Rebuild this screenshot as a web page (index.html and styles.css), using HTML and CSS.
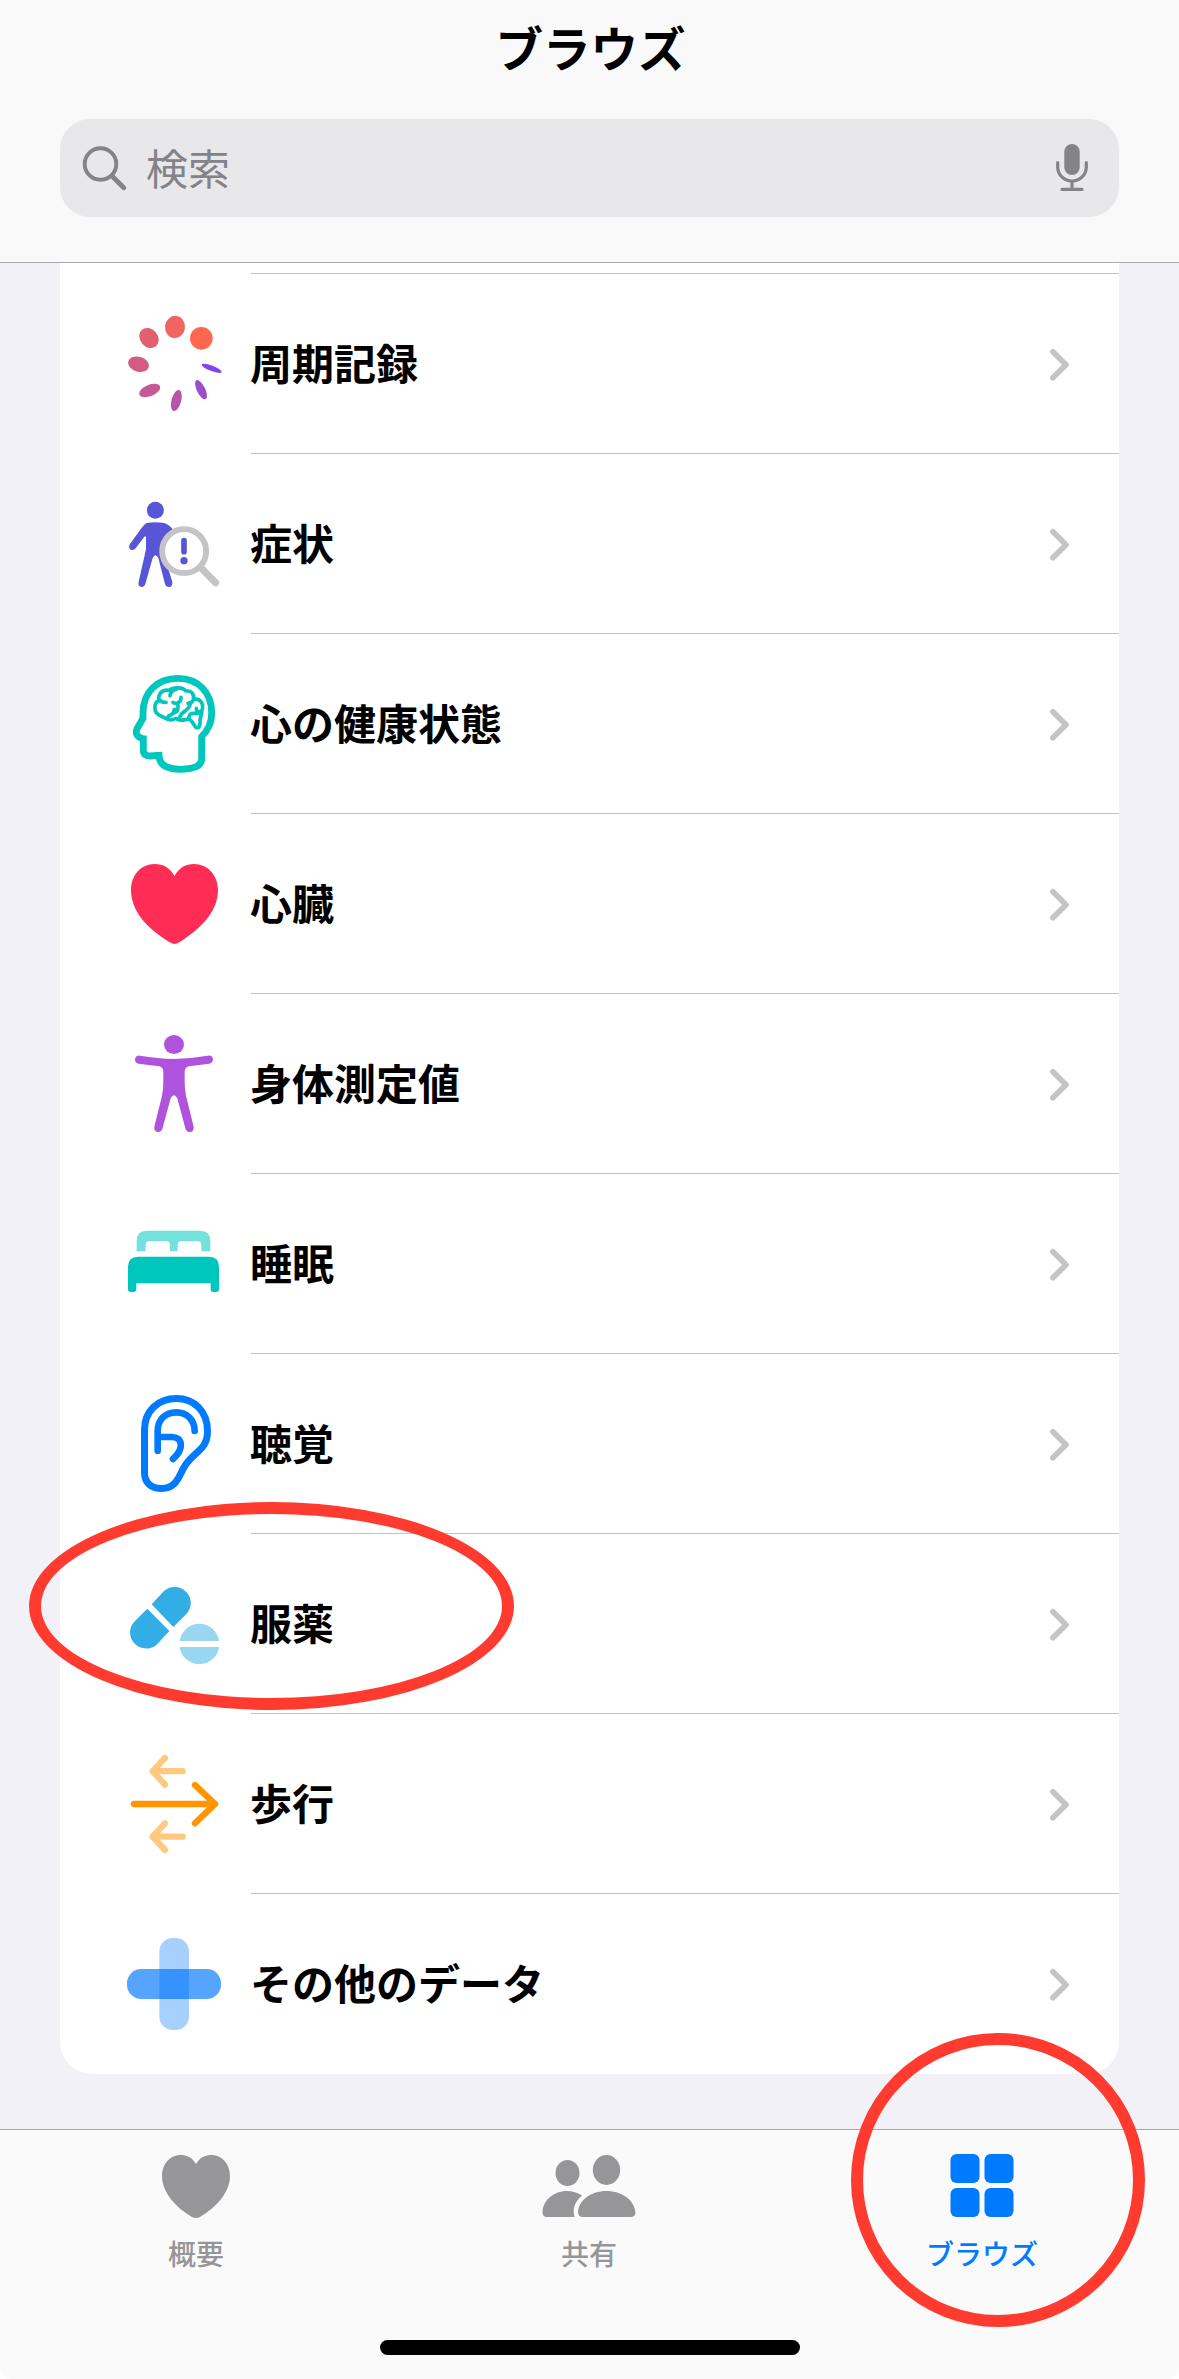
FILE: index.html
```html
<!DOCTYPE html>
<html lang="ja">
<head>
<meta charset="utf-8">
<title>ブラウズ</title>
<link rel="stylesheet" href="styles.css">
</head>
<body>
<svg class="defs" width="0" height="0">
  <symbol id="chevron" viewBox="0 0 24 36"><path d="M5.900 5.800 19 18.800 5.900 31.800" fill="none" stroke="#c4c4c7" stroke-width="5.600" stroke-linecap="round" stroke-linejoin="round"/></symbol>
</svg>
<div class="screen">
  <header class="header">
    <h1 class="title">ブラウズ</h1>
    <div class="search">
      <svg class="search-icon" viewBox="0 0 48 48"><circle cx="20.500" cy="20" r="15.800" fill="none" stroke="currentColor" stroke-width="3.900"/><path d="M32 32 43.800 43.800" stroke="currentColor" stroke-width="4.800" stroke-linecap="round"/></svg>
      <span class="placeholder">検索</span>
      <svg class="mic-icon" viewBox="0 0 34 48"><rect x="9.300" y="0" width="15.400" height="31" rx="7.700" fill="currentColor"/><path d="M2.700 18.500V23a14.300 14 0 0 0 28.600 0V18.500M17 37v8M7 45.400h20" fill="none" stroke="currentColor" stroke-width="3.200" stroke-linecap="round"/></svg>
    </div>
  </header>

  <main class="content">
    <ul class="card">
      <li class="row">
        <svg class="icon" viewBox="30 27 330 330">
          <circle cx="274" cy="115" r="34" fill="#ff684f"/>
          <ellipse cx="195" cy="81" rx="30" ry="33.500" fill="#f16462" transform="rotate(8 195 81)"/>
          <ellipse cx="117" cy="114" rx="26.500" ry="32.500" fill="#e16070" transform="rotate(-40 117 114)"/>
          <ellipse cx="85.500" cy="192.500" rx="32" ry="22.500" fill="#d35c83" transform="rotate(15 85.500 192.500)"/>
          <ellipse cx="119" cy="271.500" rx="33.500" ry="17" fill="#c65894" transform="rotate(-22 119 271.500)"/>
          <ellipse cx="199" cy="301.500" rx="14.500" ry="32.500" fill="#b654a8" transform="rotate(15 199 301.500)"/>
          <ellipse cx="273" cy="269" rx="12.500" ry="31.500" fill="#9b4dcb" transform="rotate(-26 273 269)"/>
          <ellipse cx="305" cy="205" rx="32" ry="8" fill="#7f45f0" transform="rotate(21 305 205)"/>
        </svg>
        <span class="label">周期記録</span><svg class="chevron"><use href="#chevron"/></svg>
      </li>
      <li class="row">
        <svg class="icon" viewBox="30 567 330 330">
          <g fill="#5856d6"><circle cx="136" cy="631" r="25.500"/>
          <path d="M110 669Q136 664 162 669Q178 674 192 692L160 735L165 775L187 846Q188 861 177 861Q168 861 165 852L145 774Q136 758 128 774L106 852Q103 861 95 861Q83 859 86 845L108 748V711Q106 706 102 712L78 743Q71 753 62 749Q54 742 60 732L92 688Q100 674 110 669Z"/></g>
          <circle cx="222.500" cy="753.500" r="66" fill="#fff" stroke="#c4c4c6" stroke-width="17.500"/>
          <path d="M271 802 317 848" stroke="#c4c4c6" stroke-width="21" stroke-linecap="round"/>
          <path d="M222 722V755" stroke="#5856d6" stroke-width="17" stroke-linecap="round"/><circle cx="222" cy="782" r="11" fill="#5856d6"/>
        </svg>
        <span class="label">症状</span><svg class="chevron"><use href="#chevron"/></svg>
      </li>
      <li class="row">
        <svg class="icon" viewBox="30 57 330 330" fill="none" stroke="#00c7be" stroke-linecap="round" stroke-linejoin="round">
          <path stroke-width="20.500" stroke-linecap="butt" stroke-linejoin="miter" d="M110 267H100Q72 259 81 236L99 205V188C100 125 142 85 204 85C265 85 305 128 305 188Q306 229 275 260V328Q273 357 211 358Q148 357 147 316L120 318Q100 317 100 302V258"/>
          <path stroke-width="11" d="M147 152C143 133 156 117 178 121C190 111 219 111 227 123C244 121 254 132 250 148C273 144 283 163 275 184C277 196 270 200 270 210C271 222 270 235 259 233C250 228 250 211 235 207C220 210 209 214 198 205C181 216 167 204 153 198C129 190 130 158 147 152ZM147 148Q154 158 168 157M180 138Q180 122 202 116M189 157Q193 161 203 159Q214 153 213 142M203 159Q208 185 193 189M193 178Q191 195 175 198M250 148Q250 158 234 160M241 158C242 185 210 181 208 207M237 207Q235 189 251 190H268M259 175Q258 188 275 184"/>
        </svg>
        <span class="label">心の健康状態</span><svg class="chevron"><use href="#chevron"/></svg>
      </li>
      <li class="row">
        <svg class="icon" viewBox="30 597 330 330"><path fill="#ff2d55" d="M193.500 678C179 652 160 642 134 642C93 642 63 676 63 720C63 784 112 836 178 876Q188 882 193.500 882Q199 882 209 876C273 836 324 784 324 720C324 676 293 642 252 642C227 642 208 652 193.500 678Z"/></svg>
        <span class="label">心臓</span><svg class="chevron"><use href="#chevron"/></svg>
      </li>
      <li class="row">
        <svg class="icon" viewBox="30 57 330 330" fill="#af52de"><ellipse cx="192" cy="103.500" rx="30" ry="28.500"/><path d="M90 137Q145 146 192 147Q240 146 293 137Q307 135 309 148Q309 158 298 161L236 169Q225 172 224 184V215Q224 237 228 257L251 350Q252 365 240 366Q229 367 226 355L202 265Q192 246 182 265L158 353Q154 367 143 366Q131 363 133 350L156 257Q160 237 160 215V184Q159 172 148 169L85 161Q74 158 75 147Q79 135 90 137Z"/></svg>
        <span class="label">身体測定値</span><svg class="chevron"><use href="#chevron"/></svg>
      </li>
      <li class="row">
        <svg class="icon" viewBox="30 597 330 330"><path fill="#75e1dc" d="M80 724V693Q80 662 111 662H271Q301 662 301 693V724H274V706Q274 693 261 693H216Q203 693 203 706V724H180V706Q180 693 167 693H120Q107 693 107 706V724Z"/><path fill="#00c7be" d="M54 770Q54 740 84 740H297Q327 740 327 770V838Q327 846 319 846H310Q302 846 302 838V820H79V838Q79 846 71 846H62Q54 846 54 838Z"/></svg>
        <span class="label">睡眠</span><svg class="chevron"><use href="#chevron"/></svg>
      </li>
      <li class="row">
        <svg class="icon" viewBox="30 57 330 330" fill="none" stroke="#007aff" stroke-width="21" stroke-linecap="round"><path d="M103.500 180C103.500 123 144 85.500 199 85.500C253 85.500 292.500 124 292.500 184C292.500 244 247 244 219 297C205 324 197 355 154 355.500C124 355.500 103.500 338 103.500 308Z"/><path stroke-width="20" d="M143 242V183C143 149 166 127 199 127C231 127 254 150 254 183M143 201H185C218 201 224 235 189 267"/></svg>
        <span class="label">聴覚</span><svg class="chevron"><use href="#chevron"/></svg>
      </li>
      <li class="row">
        <svg class="icon" viewBox="30 597 330 330"><path fill="#32ade6" d="M125 703 161 664A48.100 48.100 0 0 1 229 732L190 771ZM112 716 178 783 141.500 822.500A48.100 48.100 0 0 1 73.500 754.500Z"/><path fill="#99d6f2" d="M209 813A59.500 59.500 0 0 1 327 813ZM209 831H327A59.500 59.500 0 0 1 209 831Z"/></svg>
        <span class="label">服薬</span><svg class="chevron"><use href="#chevron"/></svg>
      </li>
      <li class="row">
        <svg class="icon" viewBox="30 87 330 330" fill="none" stroke-width="19" stroke-linecap="round" stroke-linejoin="round"><path stroke="#ffca80" d="M218 153.500H128M165 114 128 153.500 165 194M218 350H128M165 310 128 350 165 390"/><path stroke="#ff9500" d="M72 252H315M255 195 315 252 255 310"/></svg>
        <span class="label">歩行</span><svg class="chevron"><use href="#chevron"/></svg>
      </li>
      <li class="row">
        <svg class="icon" viewBox="30 627 330 330"><rect x="148" y="654" width="89" height="276" rx="40" fill="#a8d0ff"/><rect x="51" y="747" width="282" height="90" rx="43" fill="#55a5ff"/><rect x="148" y="747" width="89" height="90" fill="#3592ff"/></svg>
        <span class="label">その他のデータ</span><svg class="chevron"><use href="#chevron"/></svg>
      </li>
    </ul>
  </main>

  <nav class="tabbar">
    <div class="tab">
      <svg class="tab-icon" viewBox="0 0 94 64" fill="currentColor"><path d="M47 10C43 3.500 38 1 31.500 1C21 1 13 10 13 22C13 38 26 53 43 63Q47 65 51 63C68 53 81 38 81 22C81 10 73 1 62.500 1C56 1 51 3.500 47 10Z"/></svg>
      <span class="tab-label">概要</span>
    </div>
    <div class="tab">
      <svg class="tab-icon" viewBox="0 0 94 64" fill="currentColor"><ellipse cx="25.500" cy="19" rx="12" ry="13"/><ellipse cx="64.500" cy="16" rx="13.700" ry="15"/><path d="M5 63Q.500 63 .500 58C1 46 12 37 25 37Q33 37 40 41.500Q29 51 32.500 63ZM41 63Q36 63 36 58C37 46 49 37 64.500 37C80 37 92 46 93.500 58Q93.500 63 88.500 63Z"/></svg>
      <span class="tab-label">共有</span>
    </div>
    <div class="tab tab-active">
      <svg class="tab-icon" viewBox="0 0 94 64" fill="currentColor"><rect x="15.500" y="0" width="29" height="29" rx="6"/><rect x="49.500" y="0" width="29" height="29" rx="6"/><rect x="15.500" y="34" width="29" height="29" rx="6"/><rect x="49.500" y="34" width="29" height="29" rx="6"/></svg>
      <span class="tab-label">ブラウズ</span>
    </div>
    <div class="home-indicator"></div>
  </nav>
  <div class="mark mark-row"></div>
  <div class="mark mark-tab"></div>
</div>
</body>
</html>
```
FILE: styles.css
```css
* { box-sizing: border-box; }
body {
  margin: 0;
  background: #fff;
  color: #000;
  font-family: "Noto Sans CJK JP", sans-serif;
}
.defs { position: absolute; }
.screen {
  position: relative;
  display: flex;
  flex-direction: column;
  width: 1179px;
  height: 2379px;
  overflow: hidden;
}
.header {
  height: 263px;
  padding: 12px 60px 0;
  background: #f9f9f9;
  border-bottom: 1px solid #aaa;
}
.title {
  margin: 0;
  padding-left: 2px;
  height: 107px;
  font-size: 47.500px;
  font-weight: 700;
  line-height: 70px;
  text-align: center;
}
.search {
  display: flex;
  align-items: center;
  height: 98px;
  padding: 0 30px 0 20px;
  border-radius: 30px;
  background: #e8e8ea;
  color: #838388;
}
.search-icon { width: 48px; height: 48px; }
.placeholder {
  flex: 1;
  margin-left: 18px;
  padding-bottom: 3px;
  font-size: 42px;
  line-height: 60px;
}
.mic-icon { width: 34px; height: 48px; }
.content {
  height: 1866px;
  padding: 0 60px;
  background: #f2f1f7;
}
.card {
  margin: 0;
  padding: 10px 0 0;
  height: 1811px;
  list-style: none;
  background: #fff;
  border-radius: 0 0 32px 32px;
}
.row {
  display: flex;
  align-items: center;
  height: 180px;
  padding: 1px 48px 0 60px;
  background: linear-gradient(#c2c2c4, #c2c2c4) 191px 0 / 868px 1px no-repeat;
}
.icon {
  flex: none;
  width: 110px;
  height: 110px;
  overflow: visible;
}
.label {
  flex: 1;
  margin-left: 20px;
  padding-bottom: 3px;
  font-size: 42px;
  font-weight: 700;
  line-height: 60px;
}
.chevron { width: 24px; height: 36px; }
.tabbar {
  display: grid;
  grid-template-columns: repeat(3, 1fr);
  grid-template-rows: 210px 15px;
  height: 250px;
  background: #fafafa;
  border-top: 1px solid #a8a8ac;
  border-radius: 0 0 12px 12px;
}
.tab {
  display: flex;
  flex-direction: column;
  align-items: center;
  padding: 24px 1px 0 0;
  color: #969698;
}
.tab-active { color: #007aff; }
.tab-icon { width: 94px; height: 64px; }
.tab-label {
  margin-top: 15px;
  font-size: 28px;
  font-weight: 500;
  line-height: 40px;
}
.home-indicator {
  grid-column: 1 / -1;
  justify-self: center;
  width: 420px;
  height: 15px;
  border-radius: 8px;
  background: #000;
}
.mark {
  position: absolute;
  border: 12px solid #ff3b30;
  border-radius: 50%;
}
.mark-row { left: 29px; top: 1502px; width: 485px; height: 208px; }
.mark-tab { left: 851px; top: 2033px; width: 294px; height: 294px; }
```
